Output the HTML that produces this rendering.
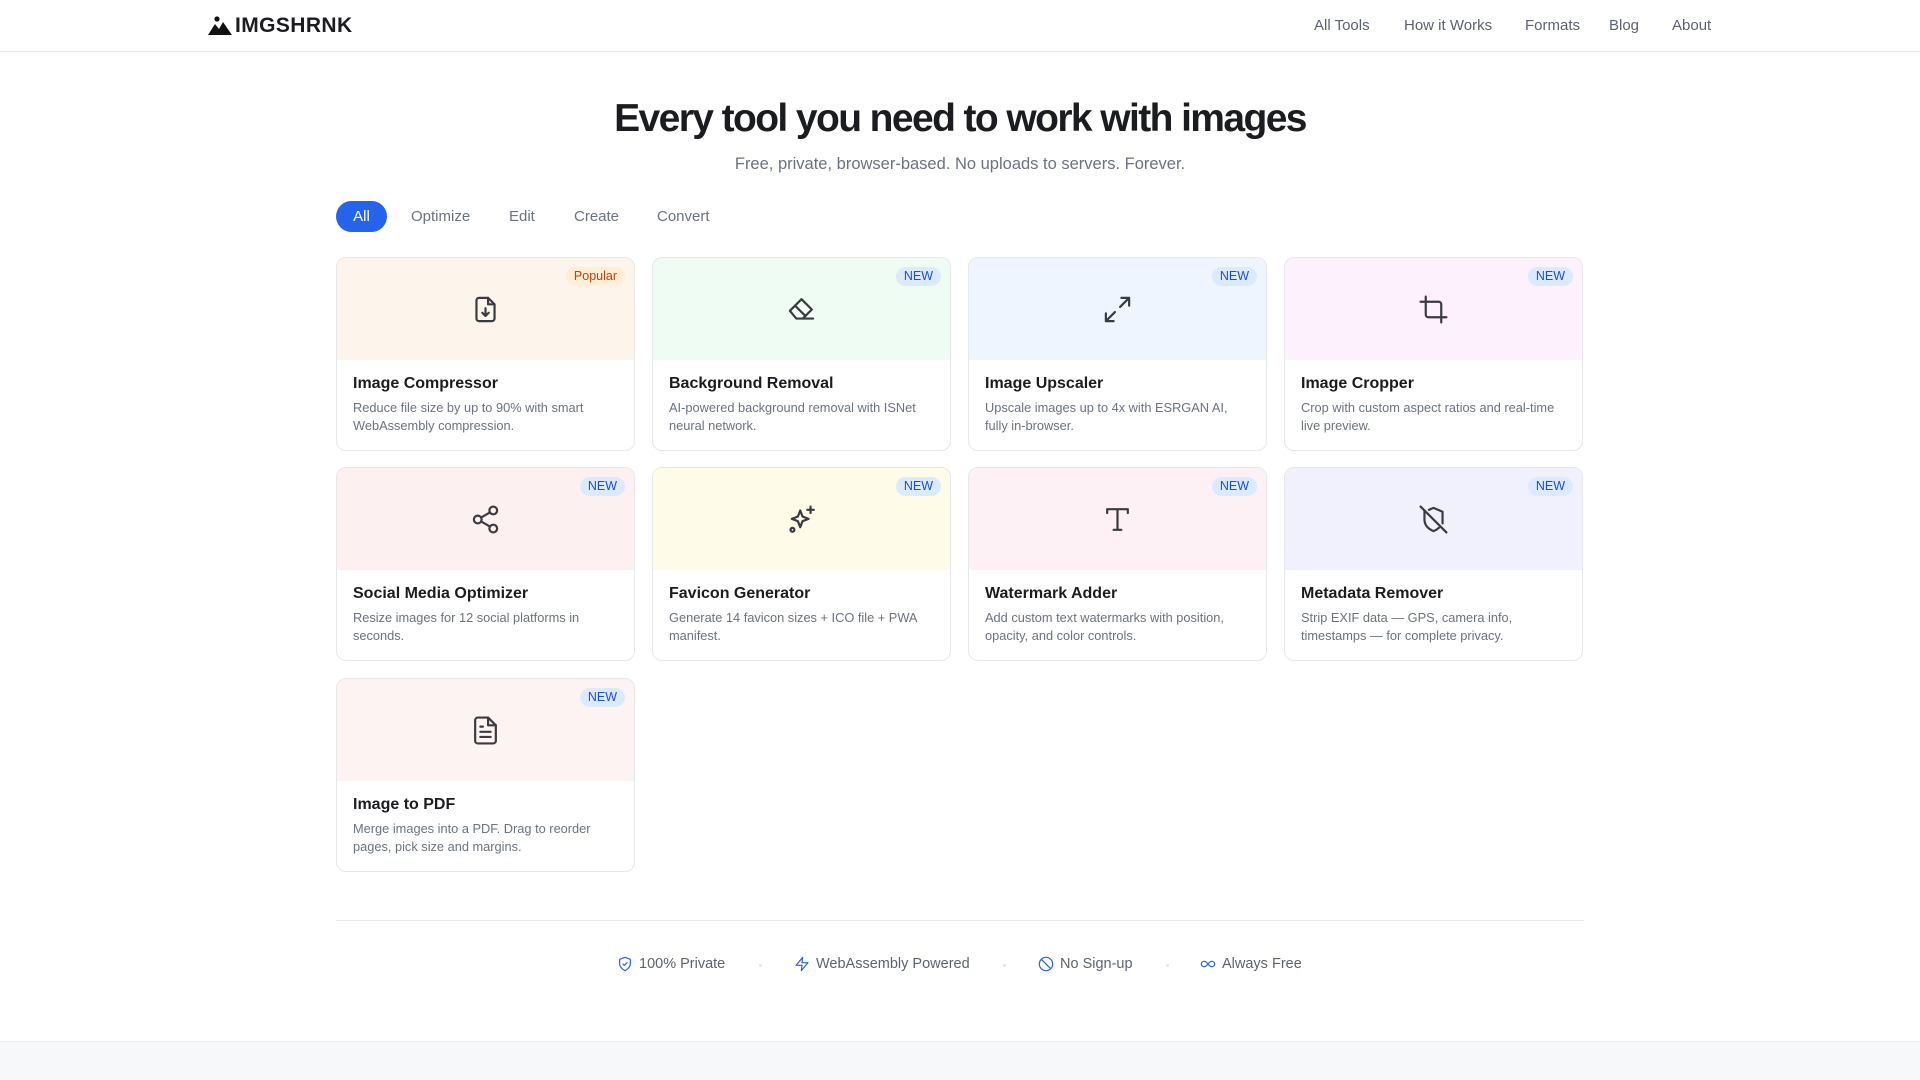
<!DOCTYPE html>
<html><head><meta charset="utf-8">
<style>
*{box-sizing:border-box;margin:0;padding:0}
body{width:1920px;height:1080px;overflow:hidden;background:#fff;font-family:"Liberation Sans",sans-serif;color:#1b1c20;position:relative}
.hdr{position:absolute;left:0;top:0;width:1920px;height:52px;border-bottom:1px solid #e9eaee}
.logo{position:absolute;left:208px;top:14px;display:flex;align-items:center;font-weight:900;font-size:21px;letter-spacing:0.4px}
.nav{position:absolute;top:17px;font-size:15px;color:#5c6270}
h1{position:absolute;top:97px;left:0;width:1920px;text-align:center;font-size:39px;font-weight:700;letter-spacing:-1.6px;color:#1b1c20}
.sub{position:absolute;top:155px;left:0;width:1920px;text-align:center;font-size:16.5px;color:#6b7280}
.tab{position:absolute;top:208px;font-size:15px;color:#6b7280}
.pill{position:absolute;left:336px;top:201px;width:51px;height:31px;border-radius:16px;background:#2563eb;color:#fff;font-size:15px;text-align:center;line-height:31px}
.card{position:absolute;width:299px;height:194px;border:1px solid #e6e7eb;border-radius:10px;overflow:hidden;background:#fff}
.top{height:102px;position:relative;display:flex;align-items:center;justify-content:center}
.top svg{width:31px;height:31px;fill:none;stroke:#3a3b40;stroke-width:1.7;stroke-linecap:round;stroke-linejoin:round}
.badge{position:absolute;right:9px;top:9px;height:19px;padding:0 8px;border-radius:10px;background:#dbeafe;color:#1d4ed8;font-size:12.5px;line-height:19px}
.badge.pop{background:#ffedd5;color:#c2410c}
.ct{padding:15px 16px 0 16px}
.ct b{display:block;font-size:16px;font-weight:700;color:#1b1c20;margin-bottom:6px}
.ct p{font-size:12.8px;line-height:18px;color:#6b7280}
.div{position:absolute;left:336px;top:920px;width:1248px;height:1px;background:#e9eaee}
.feat{position:absolute;top:956px;font-size:14.5px;color:#5c6270;display:flex;align-items:center;gap:6px}
.feat svg{width:16px;height:16px;fill:none;stroke:#2563eb;stroke-width:1.8;stroke-linecap:round;stroke-linejoin:round}
.dot{position:absolute;top:964px;width:3px;height:3px;border-radius:2px;background:#e2e4e8}
.foot{position:absolute;left:0;top:1041px;width:1920px;height:39px;background:#f7f8fa;border-top:1px solid #eceef1}
</style></head><body>
<div class="hdr">
 <div class="logo"><svg width="26" height="20" viewBox="0 0 26 20"><circle cx="9" cy="3" r="2.6" fill="#111"/><path d="M0 19 L7 8 L11 13 L15 6 L24 19 Z" fill="#111"/></svg><span style="margin-left:1px">IMGSHRNK</span></div>
 <div class="nav" style="left:1314px">All Tools</div>
 <div class="nav" style="left:1404px">How it Works</div>
 <div class="nav" style="left:1525px">Formats</div>
 <div class="nav" style="left:1609px">Blog</div>
 <div class="nav" style="left:1672px">About</div>
</div>
<h1>Every tool you need to work with images</h1>
<div class="sub">Free, private, browser-based. No uploads to servers. Forever.</div>
<div class="pill">All</div>
<div class="tab" style="left:411px">Optimize</div>
<div class="tab" style="left:509px">Edit</div>
<div class="tab" style="left:574px">Create</div>
<div class="tab" style="left:657px">Convert</div>

<div class="card" style="left:336px;top:257px"><div class="top" style="background:#fdf5ec"><span class="badge pop">Popular</span><svg viewBox="0 0 24 24"><path d="M14 3H7a2 2 0 0 0-2 2v14a2 2 0 0 0 2 2h10a2 2 0 0 0 2-2V8z"/><path d="M14 3v5h5"/><path d="M12 11v6M9.5 14.5 12 17l2.5-2.5"/></svg></div><div class="ct"><b>Image Compressor</b><p>Reduce file size by up to 90% with smart WebAssembly compression.</p></div></div>
<div class="card" style="left:652px;top:257px"><div class="top" style="background:#effcf3"><span class="badge">NEW</span><svg viewBox="0 0 24 24"><path d="M3 13 12 4l8 8-7 7H8z"/><path d="M7 9l8 8"/><path d="M13 19h8"/></svg></div><div class="ct"><b>Background Removal</b><p>AI-powered background removal with ISNet neural network.</p></div></div>
<div class="card" style="left:968px;top:257px"><div class="top" style="background:#eef5fe"><span class="badge">NEW</span><svg viewBox="0 0 24 24"><path d="M15 3h6v6M21 3l-7 7M9 21H3v-6M3 21l7-7"/></svg></div><div class="ct"><b>Image Upscaler</b><p>Upscale images up to 4x with ESRGAN AI, fully in-browser.</p></div></div>
<div class="card" style="left:1284px;top:257px"><div class="top" style="background:#fcf1fd"><span class="badge">NEW</span><svg viewBox="0 0 24 24"><path d="M6 2v14a2 2 0 0 0 2 2h14"/><path d="M18 22V8a2 2 0 0 0-2-2H2"/></svg></div><div class="ct"><b>Image Cropper</b><p>Crop with custom aspect ratios and real-time live preview.</p></div></div>

<div class="card" style="left:336px;top:467px"><div class="top" style="background:#fdf0f0"><span class="badge">NEW</span><svg viewBox="0 0 24 24"><circle cx="18" cy="5" r="3"/><circle cx="6" cy="12" r="3"/><circle cx="18" cy="19" r="3"/><path d="M8.6 13.5l6.8 4M15.4 6.5l-6.8 4"/></svg></div><div class="ct"><b>Social Media Optimizer</b><p>Resize images for 12 social platforms in seconds.</p></div></div>
<div class="card" style="left:652px;top:467px"><div class="top" style="background:#fefbe8"><span class="badge">NEW</span><svg viewBox="0 0 24 24"><path d="M11 5l1.8 4.7L17.5 11.5l-4.7 1.8L11 18l-1.8-4.7L4.5 11.5l4.7-1.8z"/><path d="M19 2v5M16.5 4.5h5"/><circle cx="5" cy="20" r="1.5"/></svg></div><div class="ct"><b>Favicon Generator</b><p>Generate 14 favicon sizes + ICO file + PWA manifest.</p></div></div>
<div class="card" style="left:968px;top:467px"><div class="top" style="background:#fdf1f6"><span class="badge">NEW</span><svg viewBox="0 0 24 24"><path d="M4 7V4h16v3M12 4v16M9 20h6"/></svg></div><div class="ct"><b>Watermark Adder</b><p>Add custom text watermarks with position, opacity, and color controls.</p></div></div>
<div class="card" style="left:1284px;top:467px"><div class="top" style="background:#f1f1fd"><span class="badge">NEW</span><svg viewBox="0 0 24 24"><path d="M2 2l20 20"/><path d="M5 5v7c0 5 3.5 7.5 7 9 1.6-.6 3-1.5 4.2-2.6M19 15V6l-7-3-3.5 1.5"/></svg></div><div class="ct"><b>Metadata Remover</b><p>Strip EXIF data — GPS, camera info, timestamps — for complete privacy.</p></div></div>

<div class="card" style="left:336px;top:678px"><div class="top" style="background:#fdf3f2"><span class="badge">NEW</span><svg viewBox="0 0 24 24"><path d="M14 2H6a2 2 0 0 0-2 2v16a2 2 0 0 0 2 2h12a2 2 0 0 0 2-2V8z"/><path d="M14 2v6h6M8 13h8M8 17h8M8 9h2"/></svg></div><div class="ct"><b>Image to PDF</b><p>Merge images into a PDF. Drag to reorder pages, pick size and margins.</p></div></div>

<div class="div"></div>
<div class="feat" style="left:617px"><svg viewBox="0 0 24 24"><path d="M12 22s8-4 8-10V5l-8-3-8 3v7c0 6 8 10 8 10z"/><path d="M9 12l2 2 4-4"/></svg>100% Private</div>
<div class="dot" style="left:759px"></div>
<div class="feat" style="left:794px"><svg viewBox="0 0 24 24"><path d="M13 2 3 14h9l-1 8 10-12h-9z"/></svg>WebAssembly Powered</div>
<div class="dot" style="left:1003px"></div>
<div class="feat" style="left:1038px"><svg viewBox="0 0 24 24"><circle cx="12" cy="12" r="10"/><path d="M4.9 4.9l14.2 14.2"/></svg>No Sign-up</div>
<div class="dot" style="left:1166px"></div>
<div class="feat" style="left:1200px"><svg viewBox="0 0 24 24"><path d="M12 12c-2-2.7-4-4-6-4a4 4 0 0 0 0 8c2 0 4-1.3 6-4zm0 0c2 2.7 4 4 6 4a4 4 0 0 0 0-8c-2 0-4 1.3-6 4z"/></svg>Always Free</div>
<div class="foot"></div>
</body></html>
